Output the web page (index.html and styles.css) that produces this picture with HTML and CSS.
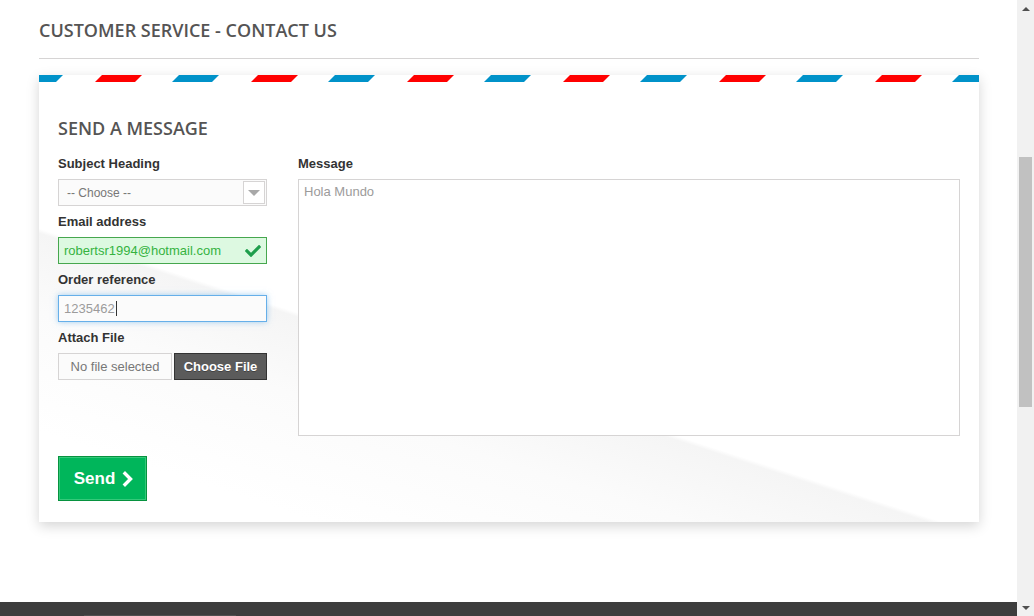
FILE: index.html
```html
<!DOCTYPE html>
<html>
<head>
<meta charset="utf-8">
<link rel="stylesheet" href="styles.css">
</head>
<body>
<div class="page">
  <main class="main">
    <h1 class="page-heading">CUSTOMER SERVICE - CONTACT US</h1>
    <div class="contact-box">
      <svg class="airmail" width="940" height="7" xmlns="http://www.w3.org/2000/svg">
        <defs>
          <pattern id="air" width="156" height="7" patternUnits="userSpaceOnUse">
            <polygon points="56,7 96,7 103,0 63,0" fill="#ff0000"/>
            <polygon points="133,7 173,7 180,0 140,0" fill="#0092c9"/>
            <polygon points="-23,7 17,7 24,0 -16,0" fill="#0092c9"/>
          </pattern>
        </defs>
        <rect width="940" height="7" fill="url(#air)"/>
      </svg>
      <div class="box-inner">
        <h3 class="subheading">SEND A MESSAGE</h3>
        <div class="form-grid">
          <div class="left-col">
            <div class="form-group">
              <label class="lbl">Subject Heading</label>
              <div class="select">
                <span class="select-text">-- Choose --</span>
                <span class="select-arrow"><span class="tri"></span></span>
              </div>
            </div>
            <div class="form-group">
              <label class="lbl">Email address</label>
              <div class="input input-ok">
                <span>robertsr1994@hotmail.com</span>
                <svg class="ok-icon" viewBox="0 0 512 512" width="18" height="16"><path fill="#1f9e4c" d="M173.898 439.404l-166.4-166.4c-9.997-9.997-9.997-26.206 0-36.204l36.203-36.204c9.997-9.998 26.207-9.998 36.204 0L192 312.69 432.095 72.596c9.997-9.997 26.207-9.997 36.204 0l36.203 36.204c9.997 9.997 9.997 26.206 0 36.204l-294.4 294.401c-9.998 9.997-26.207 9.997-36.204-.001z"/></svg>
              </div>
            </div>
            <div class="form-group">
              <label class="lbl">Order reference</label>
              <div class="input input-focus"><span>1235462</span><span class="caret"></span></div>
            </div>
            <div class="form-group">
              <label class="lbl">Attach File</label>
              <div class="uploader">
                <span class="filename">No file selected</span>
                <span class="action">Choose File</span>
              </div>
            </div>
          </div>
          <div class="right-col">
            <label class="lbl">Message</label>
            <div class="textarea">Hola Mundo</div>
          </div>
        </div>
        <button class="send-btn"><span class="send-inner">Send<svg class="chev" viewBox="0 0 12 16" width="12" height="16"><polyline points="3,2.5 8.5,8 3,13.5" fill="none" stroke="#fff" stroke-width="3.4" stroke-linecap="square"/></svg></span></button>
      </div>
    </div>
  </main>
  <footer class="footer"><div class="footer-field"></div></footer>
</div>
<div class="scrollbar">
  <div class="sb-btn"><span class="sb-up"></span></div>
  <div class="sb-thumb"></div>
  <div class="sb-fill"></div>
  <div class="sb-btn"><span class="sb-down"></span></div>
</div>
</body>
</html>
```

FILE: styles.css
```css
html, body {
  margin: 0;
  padding: 0;
  height: 616px;
  overflow: hidden;
  background: #fff;
}
body {
  display: flex;
  font-family: "Liberation Sans", Arial, sans-serif;
  font-size: 13px;
  color: #333;
}
.page {
  width: 1017px;
  height: 616px;
  display: flex;
  flex-direction: column;
}
.main {
  flex: 1;
  padding: 18px 0 0 39px;
}
.page-heading {
  width: 940px;
  margin: 0;
  font-family: "Open Sans", sans-serif;
  font-weight: 600;
  font-size: 18px;
  line-height: 24px;
  color: #555454;
  padding-bottom: 16px;
  border-bottom: 1px solid #d6d4d4;
}
.contact-box {
  width: 940px;
  margin-top: 16px;
  background: linear-gradient(198deg, #ffffff 61%, #f5f5f5 61.6%, #fbfbfb 72%, #ffffff 88%);
  box-shadow: 0 4px 12px rgba(0, 0, 0, 0.17);
}
.airmail {
  display: block;
}
.box-inner {
  padding: 35px 19px 21px 19px;
}
.subheading {
  margin: 0;
  font-family: "Open Sans", sans-serif;
  font-weight: 600;
  font-size: 18px;
  line-height: 22px;
  color: #555454;
}
.form-grid {
  display: grid;
  grid-template-columns: 209px 1fr;
  column-gap: 31px;
  margin-top: 16px;
}
.lbl {
  display: block;
  font-weight: bold;
  font-size: 13px;
  line-height: 18px;
  color: #333;
  margin-bottom: 6px;
}
.form-group {
  margin-bottom: 7px;
}
.select {
  height: 27px;
  box-sizing: border-box;
  border: 1px solid #d6d4d4;
  background: #fbfbfb;
  display: flex;
  align-items: center;
  justify-content: space-between;
}
.select-text {
  padding-left: 8px;
  font-size: 12px;
  color: #777;
}
.select-arrow {
  width: 22px;
  height: 23px;
  margin-right: 1px;
  box-sizing: border-box;
  border: 1px solid #d6d4d4;
  background: #fff;
  display: flex;
  align-items: center;
  justify-content: center;
}
.tri {
  width: 0;
  height: 0;
  border-left: 6px solid transparent;
  border-right: 6px solid transparent;
  border-top: 6px solid #a8a8a8;
}
.input {
  height: 27px;
  box-sizing: border-box;
  border: 1px solid #d6d4d4;
  background: #fbfbfb;
  display: flex;
  align-items: center;
  padding: 0 5px;
  font-size: 13px;
  color: #9c9b9b;
}
.input-ok {
  border-color: #46a74e;
  background: #ddf9e1;
  color: #35b33f;
  justify-content: space-between;
  padding-right: 4px;
}
.input-focus {
  border-color: #66afe9;
  background: #fbfbfb;
  box-shadow: 0 0 6px rgba(102, 175, 233, 0.6);
}
.caret {
  width: 1px;
  height: 15px;
  background: #333;
  margin-left: 1px;
}
.uploader {
  display: flex;
  gap: 2px;
  height: 27px;
}
.filename {
  width: 114px;
  box-sizing: border-box;
  border: 1px solid #d6d4d4;
  background: #fbfbfb;
  color: #777;
  font-size: 13px;
  display: flex;
  align-items: center;
  justify-content: center;
}
.action {
  flex: 1;
  box-sizing: border-box;
  border: 1px solid #333;
  background: #5b5b5b;
  color: #fff;
  font-weight: bold;
  font-size: 13px;
  display: flex;
  align-items: center;
  justify-content: center;
  text-shadow: 0 1px 0 rgba(0, 0, 0, 0.3);
}
.textarea {
  height: 257px;
  box-sizing: border-box;
  border: 1px solid #d6d4d4;
  background: #fff;
  padding: 3px 5px;
  line-height: 18px;
  color: #9c9b9b;
  font-size: 13px;
}
.send-btn {
  display: block;
  margin-top: 20px;
  padding: 0;
  width: 89px;
  height: 45px;
  border: 1px solid #07923f;
  background: #00b65b;
  cursor: pointer;
  font-family: "Liberation Sans", Arial, sans-serif;
}
.send-inner {
  box-sizing: border-box;
  height: 43px;
  border: 1px solid #34c97a;
  display: flex;
  align-items: center;
  justify-content: center;
  gap: 7px;
  padding-left: 3px;
  color: #fff;
  font-weight: bold;
  font-size: 17px;
}
.footer {
  height: 14px;
  background: #3d3d3d;
  padding-left: 84px;
  display: flex;
  align-items: flex-end;
}
.footer-field {
  width: 152px;
  height: 1px;
  background: #505050;
}
.scrollbar {
  width: 17px;
  height: 616px;
  background: #f1f1f1;
  display: flex;
  flex-direction: column;
  align-items: center;
}
.sb-btn {
  height: 17px;
  width: 17px;
  display: flex;
  align-items: center;
  justify-content: center;
}
.sb-up {
  width: 0;
  height: 0;
  border-left: 4px solid transparent;
  border-right: 4px solid transparent;
  border-bottom: 4px solid #505050;
}
.sb-down {
  width: 0;
  height: 0;
  border-left: 4px solid transparent;
  border-right: 4px solid transparent;
  border-top: 4px solid #505050;
}
.sb-thumb {
  margin-top: 140px;
  width: 13px;
  height: 250px;
  background: #c1c1c1;
}
.sb-fill {
  flex: 1;
}
```
